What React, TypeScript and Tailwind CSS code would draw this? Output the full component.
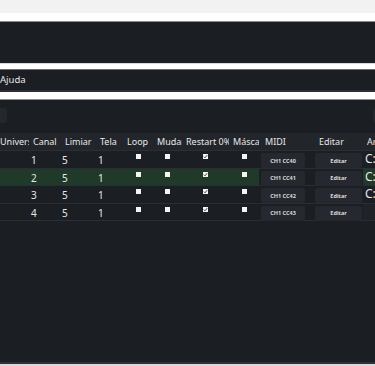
import React from 'react'

const rows = [
  { canal: '1', limiar: '5', tela: '1', midi: 'CH1 CC40', path: 'C:\\', active: false },
  { canal: '2', limiar: '5', tela: '1', midi: 'CH1 CC41', path: 'C:\\', active: true },
  { canal: '3', limiar: '5', tela: '1', midi: 'CH1 CC42', path: 'C:\\', active: false },
  { canal: '4', limiar: '5', tela: '1', midi: 'CH1 CC43', path: '', active: false },
]

function Check({ checked }: { checked: boolean }) {
  return (
    <span className="flex h-[5px] w-[5px] items-center justify-center bg-[#f4f4f4]">
      {checked && (
        <svg width="5" height="5" viewBox="0 0 5 5">
          <path d="M0.8 2.6 L2 3.8 L4.2 1.2" stroke="#333" strokeWidth="0.9" fill="none" />
        </svg>
      )}
    </span>
  )
}

export default function App() {
  return (
    <div className="h-[366px] w-[375px] overflow-hidden bg-[#f2f2f2] font-['Noto_Sans',sans-serif] text-[#e8e8e8]">
      <div className="mt-[13px] bg-white pt-[8px]">
        {/* painel superior */}
        <div className="h-[42px] border-t border-[#8c8c8c] bg-[#1b1e23]" />
        <div className="h-[6px] border-t border-[#d8d8d8] bg-white" />
        {/* menu */}
        <div className="flex h-[23px] items-center border-t border-[#6c6c6c] border-b-[2px] border-b-[#2a2d33] bg-[#1b1e23] text-[9.5px]">
          <span>Ajuda</span>
        </div>
        <div className="h-[7px] bg-white" />
        {/* painel principal */}
        <div className="h-[265px] border-t border-[#8c8c8c] border-b-[2px] border-b-[#2e3137] bg-[#1b1e23]">
          <div className="flex h-[33px] items-start justify-between pt-[8px]">
            <div className="-ml-[6px] h-[15px] w-[13px] rounded-[3px] bg-[#24272d]" />
            <div className="-mr-[6px] h-[15px] w-[8px] rounded-[3px] bg-[#24272d]" />
          </div>
          <div className="overflow-hidden">
            {/* cabeçalho */}
            <div className="flex h-[18px] items-center border-b border-[#2b2e34] bg-[#22252a] text-[9px] whitespace-nowrap">
              <div className="w-[29px] shrink-0 overflow-hidden">Univers</div>
              <div className="w-[31px] shrink-0 overflow-hidden pl-[4px]">Canal</div>
              <div className="w-[36px] shrink-0 overflow-hidden pl-[5px]">Limiar</div>
              <div className="w-[27px] shrink-0 overflow-hidden pl-[4px]">Tela</div>
              <div className="w-[30px] shrink-0 overflow-hidden pl-[4px]">Loop</div>
              <div className="w-[29px] shrink-0 overflow-hidden pl-[4px]">Mudança</div>
              <div className="w-[47px] shrink-0 overflow-hidden pl-[4px]">Restart 0%</div>
              <div className="w-[30px] shrink-0 overflow-hidden pl-[4px]">Máscara</div>
              <div className="w-[54px] shrink-0 overflow-hidden pl-[6px]">MIDI</div>
              <div className="w-[50px] shrink-0 overflow-hidden pl-[6px]">Editar</div>
              <div className="min-w-0 flex-1 overflow-hidden pl-[4px]">Arquivo</div>
            </div>
            {rows.map((r) => (
              <div
                key={r.canal}
                className={`flex h-[17.5px] items-start border-b border-[#2a2d33] text-[10px] leading-[14px] ${r.active ? 'bg-[#1f3a28]' : ''}`}
              >
                <div className="w-[29px] shrink-0" />
                <div className="w-[31px] shrink-0 pl-[2px] pt-[2px]">{r.canal}</div>
                <div className="w-[36px] shrink-0 pl-[2px] pt-[2px]">{r.limiar}</div>
                <div className="w-[27px] shrink-0 pl-[2px] pt-[2px]">{r.tela}</div>
                <div className="flex w-[30px] shrink-0 justify-center pt-[3px]"><Check checked={false} /></div>
                <div className="flex w-[29px] shrink-0 justify-center pt-[3px]"><Check checked={false} /></div>
                <div className="flex w-[47px] shrink-0 justify-center pt-[3px]"><Check checked={true} /></div>
                <div className="flex w-[30px] shrink-0 justify-center pt-[3px]"><Check checked={false} /></div>
                <div className="h-full w-[54px] shrink-0 bg-[#1b1e23] pl-[2px] pt-[2px]">
                  <div className="flex h-[15px] w-[44px] items-center justify-center rounded-[2px] bg-[#25282e] text-[5.5px] font-bold text-[#dcdcdc]">
                    {r.midi}
                  </div>
                </div>
                <div className="h-full w-[50px] shrink-0 bg-[#1b1e23] pl-[2px] pt-[2px]">
                  <div className="flex h-[15px] w-[47px] items-center justify-center rounded-[2px] bg-[#25282e] text-[5.5px] font-bold text-[#dcdcdc]">
                    Editar
                  </div>
                </div>
                <div className={`h-full min-w-0 flex-1 overflow-hidden whitespace-nowrap pl-[2px] text-[12px] leading-[15px] ${r.path ? '' : 'bg-[#1f2227]'}`}>
                  {r.path}
                </div>
              </div>
            ))}
          </div>
        </div>
        <div className="h-[2px] bg-[#d8d8d8]" />
      </div>
    </div>
  )
}
